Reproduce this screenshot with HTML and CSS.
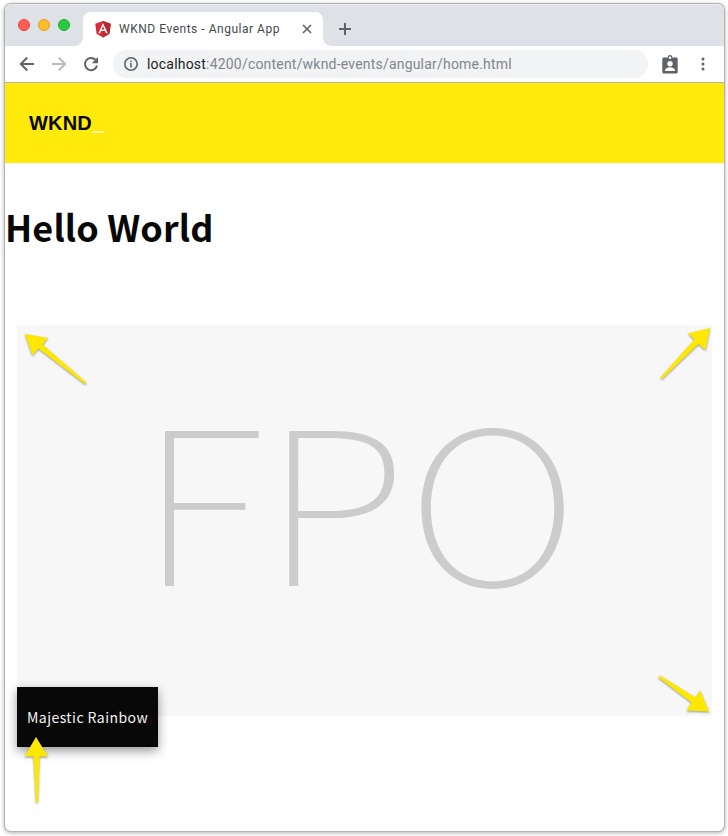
FILE: index.html
```html
<!DOCTYPE html>
<html lang="en">
<head>
<meta charset="utf-8">
<title>WKND Events - Angular App</title>
<link rel="stylesheet" href="styles.css">
</head>
<body>
<div class="window">
  <div class="tabstrip">
    <div class="lights"><i class="light red"></i><i class="light amber"></i><i class="light green"></i></div>
    <div class="tab">
      <svg class="favicon" width="16" height="17" viewBox="0 0 16 17"><path fill="#dd2b35" d="M8 0 15.7 2.7 14.5 12.8 8 16.6 1.5 12.8.3 2.7z"/><path fill="#b9272f" d="M8 0 15.7 2.7 14.5 12.8 8 16.6z"/><path fill="#fff" fill-rule="evenodd" d="M8 2 3.3 12.3H5.100L6 10H10l.9 2.300h1.800zM8 5.200 9.400 8.500H6.600z"/></svg>
      <span class="tab-title">WKND Events - Angular App</span>
      <svg class="close" width="10" height="10" viewBox="0 0 10 10"><path d="m1 1 8 8M9 1 1 9"/></svg>
    </div>
    <svg class="plus" width="14" height="14" viewBox="0 0 14 14"><path d="M7 1v12M1 7h12"/></svg>
  </div>
  <div class="toolbar">
    <svg class="nav" width="16" height="16" viewBox="0 0 16 16"><path d="M15 8H2M8.300 1.500 1.800 8l6.500 6.500"/></svg>
    <svg class="nav off" width="16" height="16" viewBox="0 0 16 16"><path d="M1 8h13M7.700 1.500 14.200 8l-6.500 6.500"/></svg>
    <svg class="nav" width="16" height="16" viewBox="0 0 16 16"><path d="M14 9.600A6.100 6.100 0 1 1 12.500 3.800"/><path class="solid" d="M15 1v6.200H8.800z"/></svg>
    <div class="address">
      <svg class="info" width="14" height="14" viewBox="0 0 14 14"><circle cx="7" cy="7" r="6.200"/><path d="M7 6v4.500M7 3.500v1.600"/></svg>
      <span class="url"><b>localhost</b>:4200/content/wknd-events/angular/home.html</span>
    </div>
    <svg class="profile" width="16" height="19" viewBox="0 0 16 19"><path fill="#5f6368" fill-rule="evenodd" d="M1.800 2.500H5.600a2.400 2.400 0 0 1 4.800 0h3.800c1 0 1.500.6 1.500 1.500v13c0 .9-.5 1.500-1.500 1.500H1.800C.8 18.500.3 17.900.3 17V4c0-.9.5-1.500 1.500-1.500zM8 1.400a1.200 1.200 0 0 0 0 2.600 1.200 1.200 0 0 0 0-2.600zM8 6a2.700 2.700 0 0 0 0 5.400A2.700 2.700 0 0 0 8 6zm-5 10h10v-.8c0-2-3.300-3-5-3s-5 1-5 3z"/></svg>
    <svg class="menu" width="4" height="14" viewBox="0 0 4 14"><circle cx="2" cy="2" r="1.500"/><circle cx="2" cy="7" r="1.500"/><circle cx="2" cy="12" r="1.500"/></svg>
  </div>
  <header class="site-header"><span class="logo">WKND</span><i class="cursor"></i></header>
  <main>
    <h1>Hello World</h1>
    <figure>
      <svg class="placeholder" width="695" height="391" viewBox="0 0 695 391"><text transform="translate(121.500 261) scale(1.130 1)">F</text><text transform="translate(245.700 261) scale(1.130 1)">P</text><text transform="translate(389.600 261) scale(1.130 1)">O</text></svg>
      <figcaption>Majestic Rainbow</figcaption>
    </figure>
  </main>
</div>
<svg class="arrows" width="728" height="836" viewBox="0 0 728 836">
  <path d="M25 334 48 338 42.500 344.500 86.500 382.500 85 384 38.500 348.500 32.500 355.500z"/>
  <path d="M710 328 705.500 350 698.500 344 662 379 660.500 377.500 694.500 339.500 688 333.500z"/>
  <path d="M709 711.500 686.500 710.500 691.500 702.500 658.500 677.500 660 675.500 695.500 697.500 700 690.500z"/>
  <path d="M36 737 48 756.500H39.500L38 802.500H36L33.500 756.500H24.500z"/>
</svg>
</body>
</html>
```
FILE: styles.css
```css
* { box-sizing: border-box; }
body { margin: 0; height: 836px; padding: 4px 4px 5px 5px; overflow: hidden; background: #fff; }
.window { width: 719px; height: 827px; border-radius: 6px; overflow: hidden; background: #fff; box-shadow: 0 0 0 1px #b3b3b3, 0 1px 4px 1px rgba(0,0,0,.3); }
.tabstrip { height: 42px; background: #dee1e6; display: flex; align-items: flex-end; border-top: 1px solid #eceef0; }
.lights { width: 78px; display: flex; gap: 8px; padding-left: 13px; margin-bottom: 15px; }
.light { width: 12px; height: 12px; border-radius: 50%; border: 1px solid; }
.red { background: #ff5c54; border-color: #e5473f; }
.amber { background: #ffbc2e; border-color: #dfa023; }
.green { background: #28c840; border-color: #1dad2b; }
.tab { position: relative; width: 240px; height: 34px; background: #fff; border-radius: 8px 8px 0 0; display: flex; align-items: center; padding: 0 11px 0 12px; }
.tab::before, .tab::after { content: ""; position: absolute; bottom: 0; width: 8px; height: 8px; }
.tab::before { left: -8px; background: radial-gradient(circle at 0 0, transparent 7.5px, #fff 8px); }
.tab::after { right: -8px; background: radial-gradient(circle at 100% 0, transparent 7.5px, #fff 8px); }
.tab-title { flex: 1; margin-left: 8px; font: 12px/16px Roboto, sans-serif; letter-spacing: .52px; color: #45494d; white-space: nowrap; }
.close, .plus { fill: none; stroke: #5f6368; stroke-width: 1.6; }
.plus { margin: 0 0 10px 15px; stroke-width: 2; }
.toolbar { height: 37px; display: flex; align-items: center; padding-left: 14px; border-bottom: 1px solid #b4b5b8; }
.nav { fill: none; stroke: #5f6368; stroke-width: 2; margin-right: 16px; }
.nav.off { stroke: #b9bbbe; }
.nav .solid { fill: #5f6368; stroke: none; }
.address { width: 535px; height: 28px; margin-left: -2px; border-radius: 14px; background: #f1f3f4; display: flex; align-items: center; padding-left: 11px; }
.info { fill: none; stroke: #5f6368; stroke-width: 1.6; }
.url { margin-left: 9px; font: 14px/20px Roboto, sans-serif; letter-spacing: .2px; color: #80868b; white-space: nowrap; }
.url b { font-weight: 400; color: #202124; }
.profile { margin-left: 14px; }
.menu { margin-left: 22.5px; fill: #5f6368; }
.site-header { height: 80px; background: #ffea0c; display: flex; align-items: center; padding-left: 24px; }
.logo { font: bold 20px/24px "Liberation Sans", sans-serif; letter-spacing: .2px; color: #080808; }
.cursor { width: 12px; height: 2px; margin-top: 18px; background: #fff5a0; }
h1 { margin: 33px 0 0; font: bold 36px/60px "Noto Sans CJK SC", sans-serif; letter-spacing: .12px; color: #080808; white-space: nowrap; }
figure { margin: 69px 12px 0; }
.placeholder { display: block; background: #f7f7f7; }
.placeholder text { font: 100 213.5px "Noto Sans CJK SC", sans-serif; fill: #ccc; }
figcaption { position: relative; width: 141px; height: 60px; margin-top: -29px; padding-left: 10px; font: 14px/61px "Noto Sans CJK SC", sans-serif; letter-spacing: .45px; color: #f4f4f4; background: #080808; box-shadow: 0 4px 10px rgba(0,0,0,.4); white-space: nowrap; }
.arrows { position: absolute; inset: 0; pointer-events: none; fill: #ffe800; filter: drop-shadow(0 1px 1px rgba(0,0,0,.4)); }
```
